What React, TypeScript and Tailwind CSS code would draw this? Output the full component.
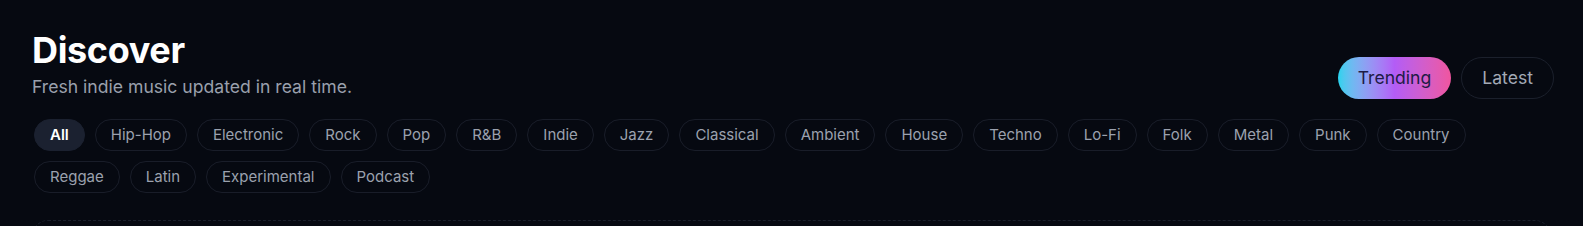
const genres = [
  "All",
  "Hip-Hop",
  "Electronic",
  "Rock",
  "Pop",
  "R&B",
  "Indie",
  "Jazz",
  "Classical",
  "Ambient",
  "House",
  "Techno",
  "Lo-Fi",
  "Folk",
  "Metal",
  "Punk",
  "Country",
  "Reggae",
  "Latin",
  "Experimental",
  "Podcast",
];

export default function App() {
  const active = "All";

  return (
    <div
      className="min-h-screen bg-[#060911] px-8 pt-[30px] text-white"
      style={{ fontFamily: "Inter, 'Noto Sans', sans-serif" }}
    >
      <header className="-mr-[3px] flex items-end justify-between">
        <div>
          <h1 className="text-[36px] leading-[40px] font-bold tracking-[-0.01em] text-white">Discover</h1>
          <p className="mt-1 text-[17.6px] leading-[26px] text-[#9aa0ad]">Fresh indie music updated in real time.</p>
        </div>
        <div className="mb-px flex items-center gap-2.5">
          <button className="h-[42px] rounded-full bg-linear-to-r from-[#22d3ee] via-[#b35cf6] to-[#f0559f] px-5 text-[17.6px] text-[#1e1b46]">
            Trending
          </button>
          <button className="h-[42px] rounded-full border border-[#1b202c] px-5 text-[17.6px] text-[#a3a9b6]">
            Latest
          </button>
        </div>
      </header>

      <div className="mt-[19px] flex max-w-[1440px] flex-wrap gap-2.5 pl-0.5">
        {genres.map((g) =>
          g === active ? (
            <button
              key={g}
              className="rounded-full border border-[#1b2130] bg-[#1b2130] px-[15px] py-[6px] text-[15px] leading-[18px] font-semibold text-white"
            >
              {g}
            </button>
          ) : (
            <button
              key={g}
              className="rounded-full border border-[#191d29] px-[15px] py-[6px] text-[15px] leading-[18px] text-[#9ba1ae]"
            >
              {g}
            </button>
          )
        )}
      </div>

      <section className="mt-[27px] h-[240px] rounded-2xl border border-dashed border-[#1a1f2b]" />
    </div>
  );
}
